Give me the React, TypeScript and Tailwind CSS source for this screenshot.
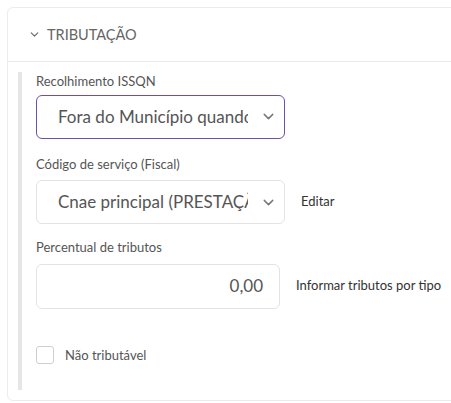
import { ChevronDown } from 'lucide-react';

function SelectBox({ value, active }: { value: string; active?: boolean }) {
  return (
    <div
      className={
        'flex h-[44px] w-[249px] items-center rounded-[6px] border bg-white pl-[21px] pr-[7px] ' +
        (active ? 'border-[#6b52a8]' : 'border-[#e3e3e3]')
      }
    >
      <span className="flex-1 overflow-hidden whitespace-nowrap text-[17px] text-[#555]">{value}</span>
      <ChevronDown className="ml-[12px] h-[17px] w-[17px] text-[#777]" strokeWidth={2} />
    </div>
  );
}

function App() {
  return (
    <div className="h-[403px] w-[451px] overflow-hidden bg-white font-['Lato','Noto_Sans',sans-serif]">
      <div className="ml-[7px] mt-[7px] h-[394px] w-[470px] rounded-[6px] border border-[#ececec]">
        {/* Header */}
        <div className="flex h-[54px] items-center gap-[6px] border-b border-[#ececec] pl-[20px]">
          <ChevronDown className="h-[13px] w-[13px] text-[#666]" strokeWidth={2} />
          <span className="text-[14.5px] text-[#666]">TRIBUTAÇÃO</span>
        </div>

        {/* Body */}
        <div className="pl-[10px] pt-[10px]">
          <div className="h-[318px] border-l-[4px] border-[#e6e6e6] pl-[14px]">
            <div className="text-[13px] text-[#555]">Recolhimento ISSQN</div>
            <div className="mt-[3px]">
              <SelectBox value="Fora do Município quando" active />
            </div>

            <div className="mt-[16px] text-[13px] text-[#555]">Código de serviço (Fiscal)</div>
            <div className="mt-[6px] flex items-center gap-[16px]">
              <SelectBox value="Cnae principal (PRESTAÇÃO)" />
              <span className="text-[13px] text-[#333]">Editar</span>
            </div>

            <div className="mt-[14px] text-[13px] text-[#555]">Percentual de tributos</div>
            <div className="mt-[6px] flex items-center gap-[16px]">
              <div className="flex h-[45px] w-[244px] items-center justify-end rounded-[6px] border border-[#e3e3e3] pr-[16px] text-[17px] text-[#555]">
                0,00
              </div>
              <span className="text-[13px] text-[#333]">Informar tributos por tipo</span>
            </div>

            <label className="mt-[37px] flex items-center gap-[11px]">
              <span className="h-[18px] w-[18px] rounded-[3px] border border-[#cfcfcf] bg-white" />
              <span className="text-[13px] text-[#555]">Não tributável</span>
            </label>
          </div>
        </div>
      </div>
    </div>
  );
}

export default App;
